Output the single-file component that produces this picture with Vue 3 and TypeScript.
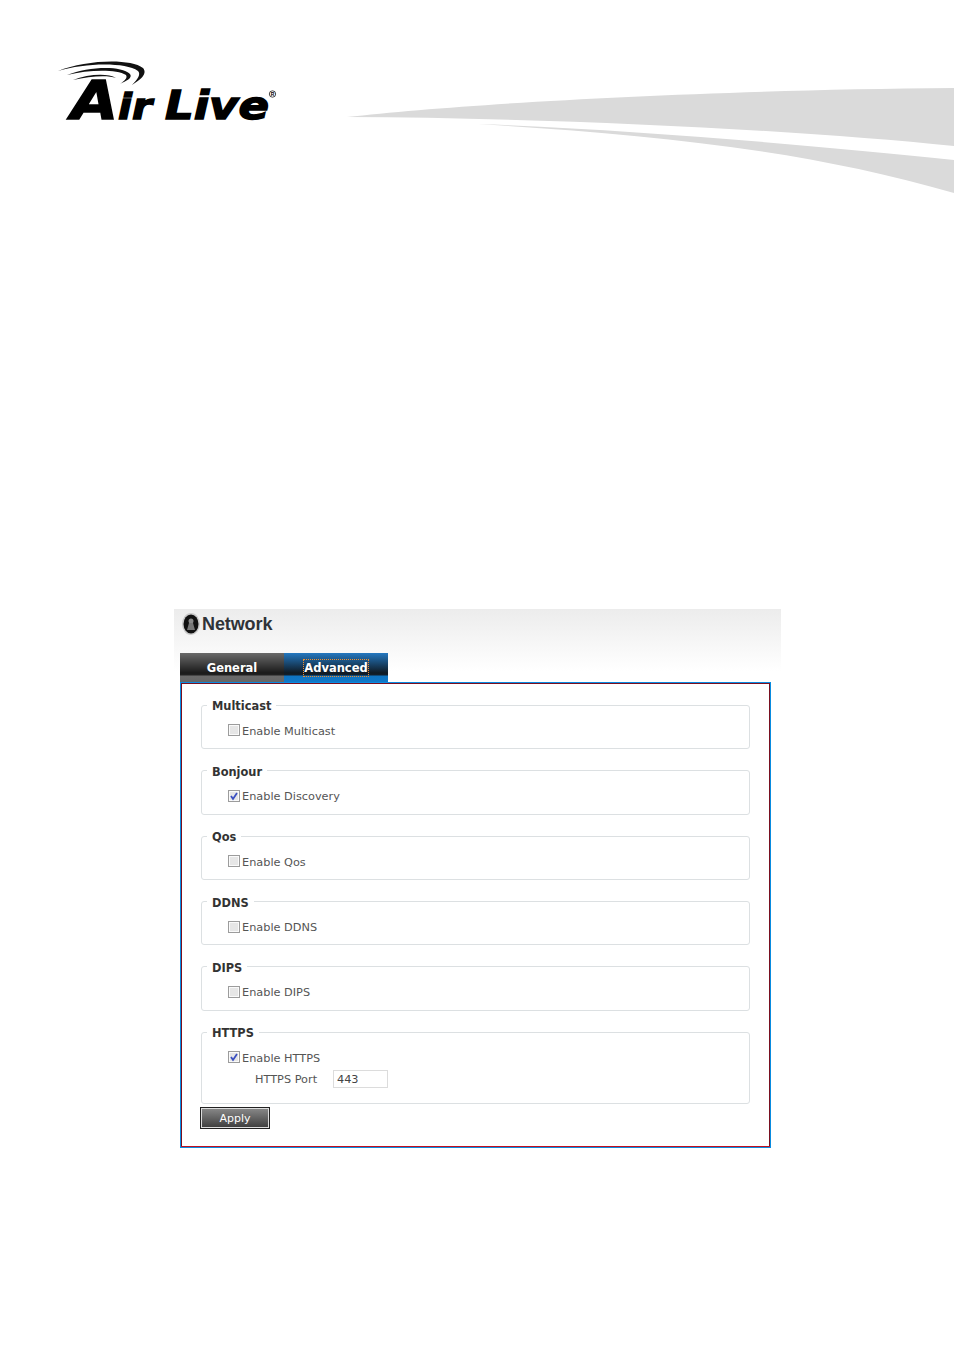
<script setup lang="ts">
import { ref } from "vue";

interface Group {
  title: string;
  label: string;
  checked: boolean;
}

const groups = ref<Group[]>([
  { title: "Multicast", label: "Enable Multicast", checked: false },
  { title: "Bonjour", label: "Enable Discovery", checked: true },
  { title: "Qos", label: "Enable Qos", checked: false },
  { title: "DDNS", label: "Enable DDNS", checked: false },
  { title: "DIPS", label: "Enable DIPS", checked: false },
  { title: "HTTPS", label: "Enable HTTPS", checked: true },
]);

const activeTab = ref(1);
</script>

<template>
  <div class="page">
    <header class="banner">
      <svg class="banner-art" width="954" height="200" viewBox="0 0 954 200">
        <path d="M347 117 C 460 104 700 90 954 88 L954 146 C 800 130 560 118 347 117 Z" fill="#dadada" />
        <path d="M478 124 C 640 130 820 146 954 160 L954 193 C 800 148 640 134 478 124 Z" fill="#dadada" />
        <path d="M58 71 C 85 60 130 58 143 68 C 148 74 140 80 132 85 C 138 79 141 74 138 71 C 125 62 85 63 58 71 Z" fill="#111" />
        <path d="M67 75 C 88 67 120 65 130 74 C 133 78 126 81 120 84 C 124 81 128 78 126 75 C 116 69 88 70 67 75 Z" fill="#111" />
        <path d="M73 80 C 88 74 108 73 116 78 C 108 75 90 76 73 80 Z" fill="#111" />
        <g class="logo-text" fill="#000" stroke="#000" stroke-width="1.400">
          <text x="71" y="119" font-size="36" textLength="81" lengthAdjust="spacingAndGlyphs"><tspan font-size="54">A</tspan>ir</text>
          <text x="165" y="119" font-size="39" textLength="104" lengthAdjust="spacingAndGlyphs">Live</text>
        </g>
        <circle cx="272.500" cy="94" r="3.200" fill="none" stroke="#000" stroke-width="0.700" />
        <text class="logo-mark" x="272.500" y="96" font-size="5" text-anchor="middle" fill="#000">R</text>
      </svg>
    </header>

    <section class="network">
      <h1 class="network-title">
        <svg class="network-icon" width="20" height="24" viewBox="0 0 20 24">
          <ellipse cx="10" cy="12" rx="9" ry="11" fill="#c9c9c9" />
          <ellipse cx="10" cy="12" rx="7.500" ry="9.500" fill="#111" />
          <circle cx="10" cy="9" r="2.500" fill="#8a8a8a" />
          <path d="M6 18 L8 11 H12 L14 18 Z" fill="#777" />
        </svg>
        Network
      </h1>

      <div class="tabs">
        <div :class="['tab', { active: activeTab === 0 }]" @click="activeTab = 0">
          <span class="tab-text">General</span>
        </div>
        <div :class="['tab', { active: activeTab === 1 }]" @click="activeTab = 1">
          <span class="tab-text">Advanced</span>
        </div>
      </div>

      <div class="panel">
        <fieldset v-for="group in groups" :key="group.title" class="group">
          <legend class="group-title">{{ group.title }}</legend>
          <label class="check-row">
            <span class="box">
              <input v-model="group.checked" type="checkbox" class="check" />
              <svg v-if="group.checked" class="tick" width="12" height="12" viewBox="0 0 12 12">
                <path d="M3 6 L5 9 L9 3" fill="none" stroke="#3a4fc0" stroke-width="1.800" />
              </svg>
            </span>
            <span class="check-label">{{ group.label }}</span>
          </label>
          <div v-if="group.title === 'HTTPS'" class="port-row">
            <span class="port-label">HTTPS Port</span>
            <input class="port-input" type="text" value="443" />
          </div>
        </fieldset>
        <button class="apply" type="button">Apply</button>
      </div>
    </section>
  </div>
</template>

<style scoped>
.page {
  width: 954px;
  height: 1350px;
  background: #fff;
  overflow: hidden;
  font-family: "DejaVu Sans", sans-serif;
}

.banner {
  height: 609px;
}

.banner-art {
  display: block;
}

.logo-text {
  font-family: "DejaVu Sans", sans-serif;
  font-weight: 700;
  font-style: italic;
}

.logo-mark {
  font-family: "Liberation Sans", sans-serif;
  font-weight: 700;
}

.network {
  margin-left: 174px;
  width: 607px;
  background: linear-gradient(#ececec 0, #fff 62px);
}

.network-title {
  display: flex;
  align-items: center;
  gap: 1px;
  height: 44px;
  margin: 0;
  padding: 0 0 14px 7px;
  box-sizing: border-box;
  font-family: "Liberation Sans", sans-serif;
  font-size: 18px;
  font-weight: 700;
  color: #2f3338;
  letter-spacing: -0.1px;
}

.network-icon {
  flex-shrink: 0;
}

.tabs {
  display: flex;
  margin-left: 6px;
  height: 29px;
}

.tab {
  display: flex;
  align-items: center;
  justify-content: center;
  width: 104px;
  padding-top: 1px;
  box-sizing: border-box;
  background: linear-gradient(#6a6a6a 0, #1a1a1a 20px, #222 22px, #6a6a6a 23px, #666 100%);
  color: #fff;
  font-size: 11.500px;
  font-weight: 700;
  cursor: pointer;
}

.tab.active {
  background: linear-gradient(#2478c0 0, #0f1a24 20px, #14202c 22px, #0f74c2 23px, #1078c8 100%);
}

.tab-text {
  padding: 1px 0;
}

.tab.active .tab-text {
  outline: 1px dotted #f09030;
}

.panel {
  width: 591px;
  height: 466px;
  margin-left: 6px;
  padding: 14.400px 20px 0 19px;
  box-sizing: border-box;
  background: #fff;
  border: 1px solid #0a8ce0;
  box-shadow: inset 0 -1px 0 #c01020, inset 0 0 0 1px #7a1020;
}

.group {
  min-width: 0;
  margin: 0 0 13.600px 1px;
  padding: 8px 0 8.800px 26px;
  border: 1px solid #dce0e2;
  border-radius: 3px;
  font-size: 11.300px;
  color: #555;
}

.group-title {
  margin-left: -21px;
  padding: 2px 5px 0;
  font-size: 11.400px;
  font-weight: 700;
  color: #333;
}

.check-row {
  display: flex;
  align-items: center;
  gap: 2px;
  height: 18px;
}

.check-label {
  padding-top: 2px;
}

.box {
  position: relative;
  display: block;
  width: 12px;
  height: 12px;
}

.check {
  display: block;
  width: 12px;
  height: 12px;
  margin: 0;
  box-sizing: border-box;
  appearance: none;
  background: #e6e6e6;
  border: 1px solid #9c9c9c;
  box-shadow: inset 0 0 0 1px #fafafa;
  border-radius: 0;
}

.tick {
  position: absolute;
  left: 0;
  top: 0;
}

.port-row {
  display: flex;
  align-items: center;
  height: 22px;
  margin: 2px 0 4.200px;
  padding-left: 27px;
}

.port-label {
  width: 78px;
}

.port-input {
  width: 55px;
  height: 18px;
  padding: 0 3px;
  box-sizing: border-box;
  border: 1px solid #dcdcdc;
  font-family: "DejaVu Sans", sans-serif;
  font-size: 11.300px;
  color: #444;
}

.apply {
  display: block;
  width: 70px;
  height: 22px;
  margin-top: -10.600px;
  padding: 0;
  background: linear-gradient(#8a8a8a, #3c3c3c);
  border: 1px solid #222;
  box-shadow: inset 0 0 0 1px #ddd;
  color: #fff;
  font-family: "DejaVu Sans", sans-serif;
  font-size: 11px;
  cursor: pointer;
}
</style>
